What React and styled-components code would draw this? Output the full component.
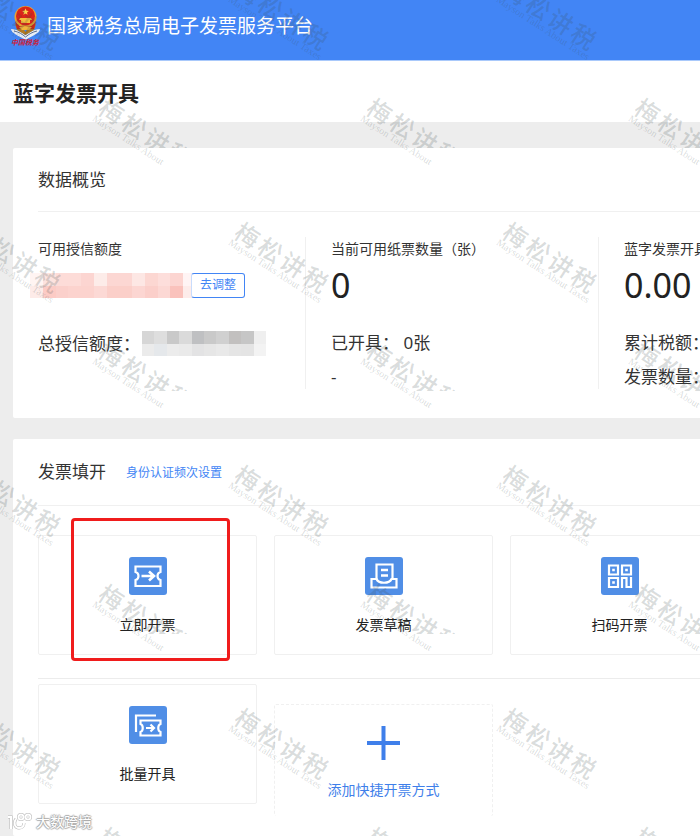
import styled, { createGlobalStyle } from 'styled-components';

const GlobalStyle = createGlobalStyle`
  * {
    box-sizing: border-box;
  }

  body {
    margin: 0;
    background: #ededed;
    color: #333;
    font-family: 'Noto Sans', 'Noto Sans CJK SC', sans-serif;
    font-size: 14px;
  }

  h1, h2, h3, p {
    margin: 0;
    font-weight: 400;
  }

  button {
    font-family: inherit;
    cursor: pointer;
  }
`;

const Page = styled.div`
  position: relative;
  display: flex;
  flex-direction: column;
  min-height: 100vh;
  overflow: hidden;
`;

const Header = styled.header`
  display: flex;
  align-items: center;
  gap: 6px;
  height: 61px;
  padding: 0 10px 8px;
  background: #4285f5;
  border-bottom: 1px solid #a9c9fb;
`;

const HeaderTitle = styled.h1`
  color: #fff;
  font-size: 19px;
  line-height: 28px;
  white-space: nowrap;
`;

const TitleBar = styled.div`
  padding: 18px 13px 15px;
  background: #fff;
`;

const PageTitle = styled.h2`
  color: #222;
  font-size: 21px;
  font-weight: 700;
  line-height: 28px;
`;

const Main = styled.main`
  display: flex;
  flex: 1;
  flex-direction: column;
  gap: 21px;
  padding: 26px 0 0 13px;
`;

const Panel = styled.section`
  flex: ${(props) => (props.$grow ? 1 : 'none')};
  padding: 0 0 ${(props) => (props.$grow ? '16px' : '29px')} 25px;
  background: #fff;
  border-radius: 2px 0 0 2px;
  overflow: hidden;
`;

const PanelHead = styled.div`
  display: flex;
  align-items: center;
  gap: 20px;
  height: ${(props) => (props.$tall ? '67px' : '64px')};
  border-bottom: 1px solid #f0f0f0;
`;

const PanelTitle = styled.h3`
  font-size: 17px;
  line-height: 24px;
`;

const PanelLink = styled.a`
  padding-top: 2px;
  color: #4285f5;
  font-size: 12px;
  line-height: 20px;
  text-decoration: none;
`;

const Stats = styled.div`
  display: grid;
  grid-template-columns: repeat(3, minmax(293px, 1fr));
  padding-top: 25px;
`;

const Stat = styled.div`
  display: flex;
  flex-direction: column;
  min-height: 152px;

  & + & {
    position: relative;
  }

  & + &::before {
    content: '';
    position: absolute;
    top: 0;
    bottom: 0;
    left: -26px;
    border-left: 1px solid #f0f0f0;
  }
`;

const StatLabel = styled.p`
  font-size: 14px;
  line-height: 24px;
`;

const StatValue = styled.div`
  display: flex;
  align-items: center;
  height: 48px;
  margin-bottom: 22px;
  color: #222;
  font-size: 34px;
  line-height: 48px;
`;

const StatLine = styled.p`
  display: flex;
  align-items: center;
  gap: 2px;
  margin-bottom: 10px;
  font-size: 17px;
  line-height: 24px;
  white-space: pre;

  &:last-child {
    margin-bottom: 0;
  }
`;

const HiddenAmount = styled.div`
  display: flex;
  margin-left: -8px;
`;

const AdjustButton = styled.button`
  width: 54px;
  height: 25px;
  margin-left: -5px;
  padding: 0;
  background: #fff;
  border: 1px solid #4285f5;
  border-left-color: #c8dcfc;
  border-radius: 3px;
  color: #4285f5;
  font-size: 12px;
  line-height: 20px;
`;

const CardRow = styled.div`
  display: grid;
  grid-template-columns: repeat(3, minmax(219px, 1fr));
  gap: 17px;
  padding-top: ${(props) => (props.$first ? '29px' : '5px')};
  padding-bottom: ${(props) => (props.$first ? '23px' : '0')};
  border-bottom: ${(props) => (props.$first ? '1px solid #ececec' : '0')};
`;

const CardCell = styled.div`
  position: relative;
`;

const Card = styled.button`
  display: flex;
  flex-direction: column;
  align-items: center;
  gap: 18px;
  width: 100%;
  height: 120px;
  padding: 21px 0 0;
  background: #fff;
  border: 1px solid #f0f0f0;
  border-radius: 2px;
  color: #222;
  font-size: 14px;
  line-height: 24px;
`;

const AddCard = styled(Card)`
  height: 112px;
  margin-top: 20px;
  border-style: dashed;
  border-bottom: 0;
  color: #3f7fea;
`;

const Highlight = styled.span`
  position: absolute;
  top: -17px;
  right: 27px;
  bottom: -6px;
  left: 33px;
  border: 3px solid #f01c1c;
  border-radius: 4px;
  pointer-events: none;
`;

const WatermarkLayer = styled.div`
  position: absolute;
  inset: 0;
  overflow: hidden;
  pointer-events: none;
  user-select: none;
`;

const WatermarkGrid = styled.div`
  position: absolute;
  top: ${(props) => (props.$short ? '85px' : '-34px')};
  left: ${(props) => (props.$short ? '-190px' : '-54px')};
  display: grid;
  grid-template-columns: repeat(4, 268px);
  grid-auto-rows: 243px;
`;

const Mark = styled.div`
  position: relative;
  color: rgba(60, 76, 76, 0.2);
  white-space: nowrap;
`;

const MarkClip = styled.div`
  height: ${(props) => (props.$short ? '63px' : '120px')};
  padding: 10px 0 0 30px;
  overflow: hidden;
`;

const MarkTitle = styled.div`
  display: flex;
  gap: 3px;
  font-size: 24px;
  font-weight: 500;
  line-height: 24px;
  transform: rotate(33deg);
  transform-origin: 0 0;
`;

const MarkSub = styled.div`
  position: absolute;
  top: 10px;
  left: 30px;
  padding-top: 22px;
  font-family: 'Liberation Serif', serif;
  font-size: 10px;
  line-height: 10px;
  transform: rotate(33deg);
  transform-origin: 0 0;
`;

const Credit = styled.div`
  position: absolute;
  bottom: 4px;
  left: 7px;
  display: flex;
  align-items: center;
  gap: 3px;
  color: #fff;
  font-size: 14px;
  line-height: 20px;
  text-shadow: 1px 0 1px #aaa, -1px 0 1px #aaa, 0 1px 1px #aaa, 0 -1px 1px #aaa;
`;

const Emblem = () => (
  <svg width="31" height="42" viewBox="0 0 31 42" aria-hidden="true">
    <path d="M1 24c5 0 9 2 14.500 6C21 26 25 24 30 24c-1 5-7 6-14.500 11C8 30 2 29 1 24z" fill="#e8edf5" />
    <path d="M4 26c5 1 8 3 11.500 6 3.500-3 7-5 11.500-6" fill="none" stroke="#5c6f92" strokeWidth="1" />
    <path d="M5 19l7 3 3.500 5 3.500-5 7-3-2 6-8.500 5L7 25z" fill="#b27a22" />
    <circle cx="15.500" cy="12" r="11" fill="#e9a532" />
    <circle cx="15.500" cy="11" r="9.500" fill="#dc2418" />
    <path d="M15.500 3.500l1 2.200 2.300.200-1.800 1.500.600 2.300-2.100-1.200-2.100 1.200.600-2.300-1.800-1.500 2.300-.200z" fill="#ffd34d" />
    <path d="M10 13h11l1 2H9zM11 15h9v3h-9z" fill="#f7bd3c" />
    <path d="M5 16c3 5 6 6 10.500 6s7.500-1 10.500-6l-2 8H7z" fill="#c8281c" />
    <path d="M9 22h13l-3 3h-7z" fill="#f2b53a" />
    <text x="1" y="40" fill="#d0203a" fontSize="7" fontWeight="700" fontStyle="italic">
      中国税务
    </text>
  </svg>
);

const Mosaic = ({ rows, width }) => (
  <svg
    width={width}
    height="25"
    viewBox={`0 0 ${rows[0].length} 2`}
    preserveAspectRatio="none"
    shapeRendering="crispEdges"
    aria-hidden="true"
  >
    {rows.map((row, y) =>
      row.map((fill, x) => (
        <rect key={`${x}-${y}`} x={x} y={y} width="1" height="1" fill={fill} />
      ))
    )}
  </svg>
);

const pinkRows = [
  ['#fff4f2', '#fde3df', '#fddcd8', '#fddcd8', '#fcd5d1', '#fdece9', '#fcd7d3', '#fcd7d3', '#fde7e4', '#fcd7d2', '#fddedb', '#fcd5d1', '#fff4f4'],
  ['#fdebe8', '#fccbc5', '#fbd0cb', '#fcd3ce', '#fcd3ce', '#fcd9d5', '#fbcfc9', '#fbcfc9', '#fcd6d2', '#fbcfca', '#fcd8d4', '#fac2bc', '#fdecea']
];

const grayRows = [
  ['#d6d6d6', '#dedede', '#c9c9c9', '#dadada', '#bfc0c2', '#c9c9c9', '#d0d0d0', '#c2c0bf', '#c6c6c6', '#efefef'],
  ['#ebebeb', '#e5e8eb', '#ececec', '#eaeaea', '#e3e3e4', '#e6e6e6', '#e9e9e9', '#e5e5e5', '#e4e4e4', '#f3f3f3']
];

const Tile = ({ children }) => (
  <svg width="38" height="38" viewBox="0 0 38 38" fill="none" stroke="#fff" strokeWidth="2.200" aria-hidden="true">
    <rect width="38" height="38" rx="3" fill="#508ee6" stroke="none" />
    {children}
  </svg>
);

const TicketIcon = () => (
  <Tile>
    <path d="M6.500 9.500h25v5.500c-4 1-4 7 0 8v6h-25v-6c4-1 4-7 0-8z" />
    <path d="M12.500 19h12M20 14.500l5 4.500-5 4.500" strokeWidth="2.600" />
  </Tile>
);

const DraftIcon = () => (
  <Tile>
    <path d="M11.500 22V7.500h16V22" />
    <path d="M16 13h7M16 18.500h7" strokeWidth="2.600" />
    <path d="M6.500 22h5c2 5 13 5 15 0h5v8.500h-25z" />
  </Tile>
);

const QrIcon = () => (
  <Tile>
    <path d="M8 8.500h9v9H8zM21 8.500h9v9h-9zM8 21h9v9H8z" />
    <path d="M11.200 11.700h2.600v2.600h-2.600zM24.200 11.700h2.600v2.600h-2.600zM11.200 24.200h2.600v2.600h-2.600z" fill="#fff" stroke="none" />
    <path d="M21 31V21h4.500v9H30V20M21 26v5" />
  </Tile>
);

const BatchIcon = () => (
  <Tile>
    <path d="M7 26V9.500h20" />
    <path d="M11.500 14.500h20v3.500c-3 1-3 7 0 8v3.500h-20V26c3-1 3-7 0-8z" />
    <path d="M17 22h7M21.500 18.500l3.500 3.500-3.500 3.500" />
  </Tile>
);

const PlusIcon = () => (
  <svg width="33" height="34" viewBox="0 0 33 34" stroke="#3f7fea" strokeWidth="4" aria-hidden="true">
    <path d="M0 17h33M16.500 0v34" />
  </svg>
);

const CreditLogo = () => (
  <svg width="26" height="18" viewBox="0 0 26 18" fill="none" aria-hidden="true">
    {['#b5b5b5', '#fff'].map((stroke, i) => (
      <g key={stroke} stroke={stroke} strokeWidth={i ? 2 : 3}>
        <path d="M1 4h3v12" />
        <path d="M9 6c-3 4-1 9 3 9 3 0 5-2 5-5" />
        <circle cx="14" cy="4" r="2.500" />
        <circle cx="21" cy="4" r="2.500" />
      </g>
    ))}
  </svg>
);

const marks = Array.from({ length: 16 }, (_, i) => i);

const Watermark = ({ short }) => (
  <WatermarkGrid $short={short}>
    {marks.map((i) => (
      <Mark key={i}>
        <MarkClip $short={short}>
          <MarkTitle>
            <span>梅</span>
            <span>松</span>
            <span>讲</span>
            <span>税</span>
          </MarkTitle>
        </MarkClip>
        <MarkSub>{short ? 'Mayson Talks About' : 'Mayson Talks About Taxes'}</MarkSub>
      </Mark>
    ))}
  </WatermarkGrid>
);

const App = () => {
  return (
    <Page>
      <GlobalStyle />
      <Header>
        <Emblem />
        <HeaderTitle>国家税务总局电子发票服务平台</HeaderTitle>
      </Header>

      <TitleBar>
        <PageTitle>蓝字发票开具</PageTitle>
      </TitleBar>

      <Main>
        <Panel>
          <PanelHead>
            <PanelTitle>数据概览</PanelTitle>
          </PanelHead>
          <Stats>
            <Stat>
              <StatLabel>可用授信额度</StatLabel>
              <StatValue>
                <HiddenAmount>
                  <Mosaic rows={pinkRows} width={166} />
                </HiddenAmount>
                <AdjustButton type="button">去调整</AdjustButton>
              </StatValue>
              <StatLine>
                总授信额度：
                <Mosaic rows={grayRows} width={124} />
              </StatLine>
            </Stat>
            <Stat>
              <StatLabel>当前可用纸票数量（张）</StatLabel>
              <StatValue>0</StatValue>
              <StatLine>已开具： 0张</StatLine>
              <StatLine>-</StatLine>
            </Stat>
            <Stat>
              <StatLabel>蓝字发票开具</StatLabel>
              <StatValue>0.00</StatValue>
              <StatLine>累计税额：</StatLine>
              <StatLine>发票数量：</StatLine>
            </Stat>
          </Stats>
        </Panel>

        <Panel $grow>
          <PanelHead $tall>
            <PanelTitle>发票填开</PanelTitle>
            <PanelLink href="#auth">身份认证频次设置</PanelLink>
          </PanelHead>
          <CardRow $first>
            <CardCell>
              <Card type="button">
                <TicketIcon />
                立即开票
              </Card>
              <Highlight />
            </CardCell>
            <CardCell>
              <Card type="button">
                <DraftIcon />
                发票草稿
              </Card>
            </CardCell>
            <CardCell>
              <Card type="button">
                <QrIcon />
                扫码开票
              </Card>
            </CardCell>
          </CardRow>
          <CardRow>
            <CardCell>
              <Card type="button">
                <BatchIcon />
                批量开具
              </Card>
            </CardCell>
            <CardCell>
              <AddCard type="button">
                <PlusIcon />
                添加快捷开票方式
              </AddCard>
            </CardCell>
          </CardRow>
        </Panel>
      </Main>

      <WatermarkLayer aria-hidden="true">
        <Watermark />
        <Watermark short />
      </WatermarkLayer>
      <Credit>
        <CreditLogo />
        大数跨境
      </Credit>
    </Page>
  );
};

export default App;
